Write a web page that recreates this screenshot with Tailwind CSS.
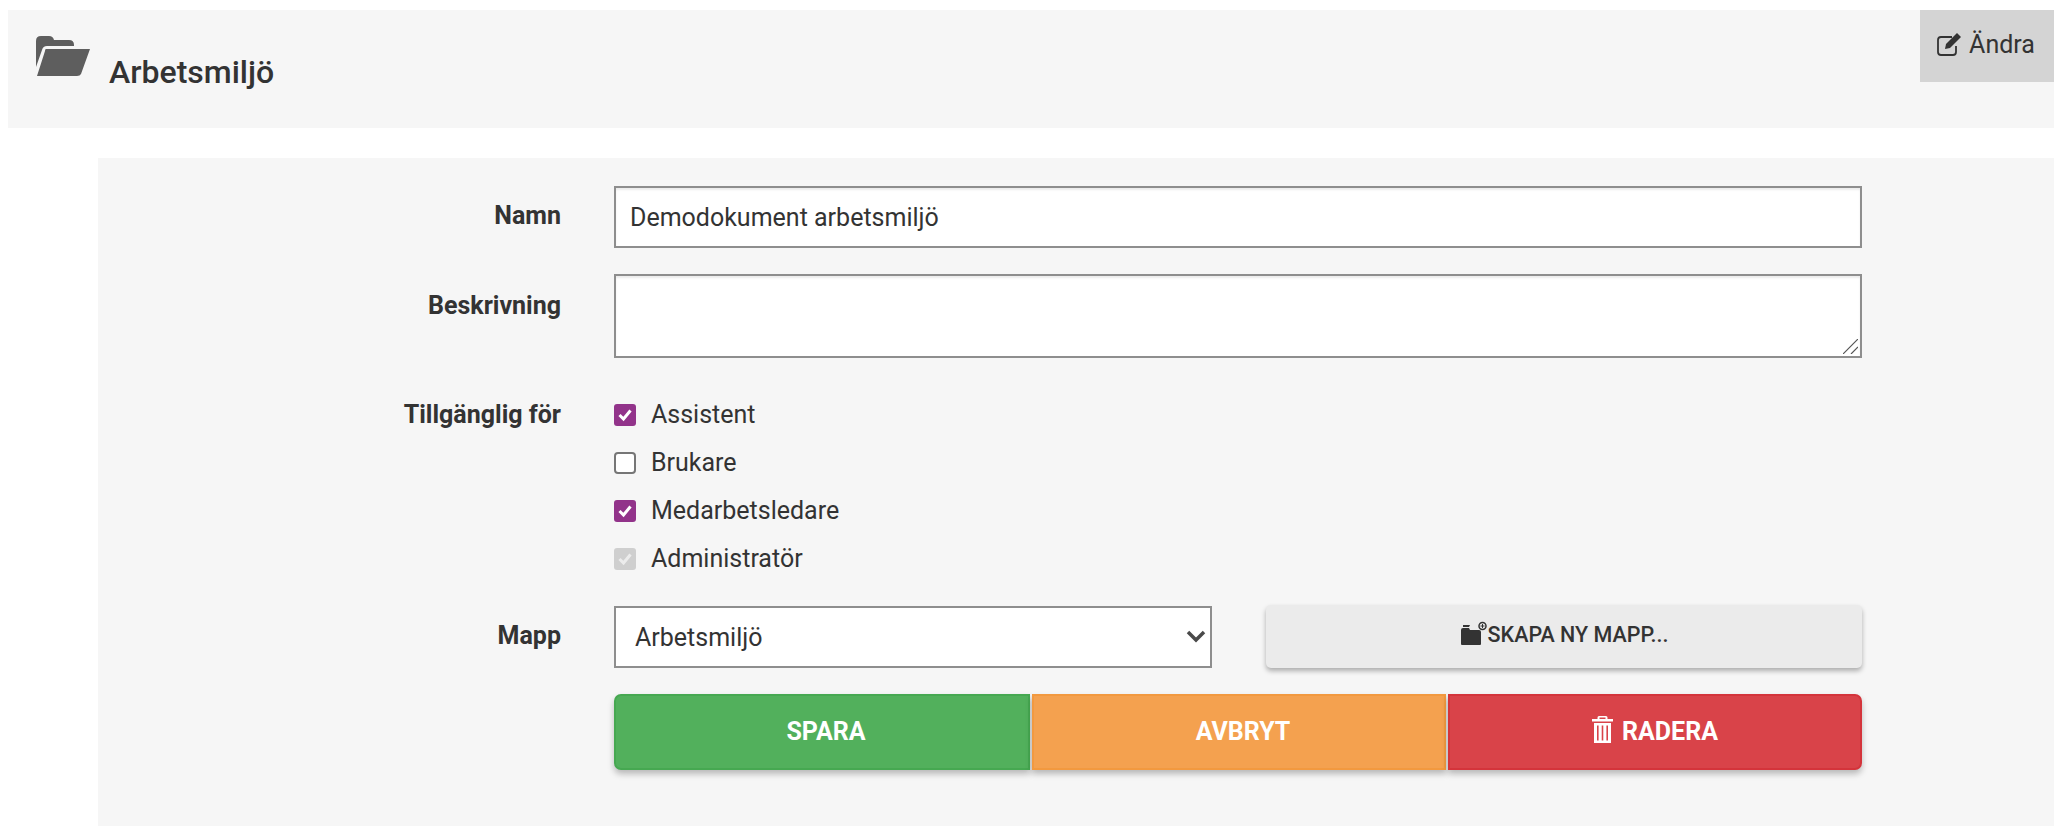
<!DOCTYPE html>
<html lang="sv">
<head>
<meta charset="utf-8" />
<title>Arbetsmiljö</title>
<script src="https://cdn.jsdelivr.net/npm/@tailwindcss/browser@4"></script>
</head>
<body class="bg-white font-['Roboto',sans-serif] text-[#333333] overflow-hidden">
  <div class="pt-[10px] pl-2 w-[2054px]">
    <!-- header -->
    <div class="flex justify-between items-start h-[118px] bg-[#f6f6f6]">
      <div class="flex pl-7 pt-[26px]">
        <svg class="w-[54px] h-[40px] text-[#5e5e5e]" viewBox="0 0 54 40" fill="currentColor">
          <path d="M0 5q0-5 5-5h8q4 0 5 4h15q5 0 5 5v1H11q-4 0-5 4L0 31z" />
          <path d="M10 13h44l-9 25q-1 2-4 2H1l8-25q0-2 1-2z" />
        </svg>
        <h1 class="ml-[19px] mt-[17px] text-[32px] leading-[38px] font-medium">Arbetsmiljö</h1>
      </div>
      <button class="flex items-center justify-center w-[134px] h-[72px] pb-[3px] bg-[#d4d4d4] text-[25px]">
        <svg class="w-[26px] h-[24px] mr-[6px] mb-[2px] -ml-[2px]" viewBox="0 0 26 24" fill="none">
          <path d="M19 14v6q0 3-3 3H4q-3 0-3-3V8q0-3 3-3h11" stroke="currentColor" stroke-width="1.800" />
          <path d="M9 12 20 1l4 4-11 11-5 1z" fill="currentColor" />
        </svg>
        Ändra
      </button>
    </div>

    <!-- form panel -->
    <div class="ml-[90px] mt-[30px] h-[668px] bg-[#f6f6f6] pt-7 pr-[192px] text-[25px]">
      <div class="grid grid-cols-[463px_1fr] gap-x-[53px]">
        <label class="text-right font-bold pt-[15px] leading-[30px]">Namn</label>
        <input class="h-[62px] w-full border-2 border-[#8e8e8e] bg-white px-[14px] shadow-[inset_0_2px_2px_rgba(0,0,0,0.08)]" type="text" value="Demodokument arbetsmiljö" />

        <label class="text-right font-bold mt-[26px] pt-[17px] leading-[30px]">Beskrivning</label>
        <div class="relative mt-[26px]">
          <textarea class="block h-[84px] w-full resize-none border-2 border-[#8e8e8e] bg-white shadow-[inset_0_2px_2px_rgba(0,0,0,0.08)]"></textarea>
          <svg class="absolute right-[4px] bottom-[4px] w-[15px] h-[15px]" viewBox="0 0 15 15" fill="none" stroke="#555" stroke-width="1.200">
            <path d="M0 15 15 0M8 15 15 8" />
          </svg>
        </div>

        <label class="text-right font-bold mt-[42px] leading-[30px]">Tillgänglig för</label>
        <div class="mt-[42px] flex flex-col gap-[18px] leading-[30px]">
          <div class="flex items-center h-[30px] gap-[15px]">
            <span class="flex items-center justify-center w-[22px] h-[22px] rounded-[3px] bg-[#92338a]">
              <svg class="w-4 h-4" viewBox="0 0 16 16" fill="none"><path d="M2.500 8 6.500 12 13.500 3.500" stroke="#fff" stroke-width="3" /></svg>
            </span>
            Assistent
          </div>
          <div class="flex items-center h-[30px] gap-[15px]">
            <span class="w-[22px] h-[22px] rounded-[4px] border-2 border-[#767676] bg-white"></span>
            Brukare
          </div>
          <div class="flex items-center h-[30px] gap-[15px]">
            <span class="flex items-center justify-center w-[22px] h-[22px] rounded-[3px] bg-[#92338a]">
              <svg class="w-4 h-4" viewBox="0 0 16 16" fill="none"><path d="M2.500 8 6.500 12 13.500 3.500" stroke="#fff" stroke-width="3" /></svg>
            </span>
            Medarbetsledare
          </div>
          <div class="flex items-center h-[30px] gap-[15px]">
            <span class="flex items-center justify-center w-[22px] h-[22px] rounded-[3px] bg-[#cfcfcf]">
              <svg class="w-4 h-4" viewBox="0 0 16 16" fill="none"><path d="M2.500 8 6.500 12 13.500 3.500" stroke="#ececec" stroke-width="3" /></svg>
            </span>
            Administratör
          </div>
        </div>

        <label class="text-right font-bold mt-[32px] pt-[15px] leading-[30px]">Mapp</label>
        <div class="mt-[32px] flex gap-[54px]">
          <div class="relative w-[598px] h-[62px] border-2 border-[#8e8e8e] bg-white flex items-center pl-[19px] pt-[2px]">
            Arbetsmiljö
            <svg class="absolute right-[3px] top-[18px] w-[22px] h-5" viewBox="0 0 22 20" fill="none"><path d="M3 6 11 14 19 6" stroke="#4a4a4a" stroke-width="3.500" /></svg>
          </div>
          <button class="flex flex-1 items-center justify-center h-[63px] -mt-[1px] pb-[3px] rounded-[5px] bg-[#ebebeb] text-[21.500px] font-medium shadow-[0_3px_5px_rgba(0,0,0,0.3)]">
            <svg class="w-[28px] h-[25px] mb-[3px]" viewBox="0 0 28 25" fill="#333333">
              <path d="M1 9q0-2 2-2h6l1 2h9q2 0 2 2v12q0 1-1 1H2q-1 0-1-1z" />
              <path d="M3 6h6l1-2H3z" />
              <circle cx="22.500" cy="5" r="3.500" fill="none" stroke="#333333" stroke-width="1.500" />
              <path d="M22.500 3v4M20.500 5h4" stroke="#333333" stroke-width="1" />
            </svg>
            SKAPA NY MAPP...
          </button>
        </div>

        <div></div>
        <div class="mt-[26px] flex gap-[2px] h-[76px] text-white text-[25px] font-bold">
          <button class="w-[416px] pl-2 rounded-l-[7px] bg-[#52b05c] border-2 border-[#46a851] shadow-[0_4px_6px_rgba(0,0,0,0.25)]">SPARA</button>
          <button class="w-[414px] pl-2 bg-[#f4a14f] border-2 border-[#f2993f] shadow-[0_4px_6px_rgba(0,0,0,0.25)]">AVBRYT</button>
          <button class="flex flex-1 items-center justify-center gap-[9px] rounded-r-[7px] bg-[#d94349] border-2 border-[#d4343b] shadow-[0_4px_6px_rgba(0,0,0,0.25)]">
            <svg class="w-[21px] h-[27px] mb-[6px]" viewBox="0 0 21 27" fill="#fff">
              <path d="M7 0h7q1.500 0 1.500 1.500V3H21v2.500H0V3h5.500V1.500Q5.500 0 7 0zM7.500 1.500V3h6V1.500z" fill-rule="evenodd" />
              <path fill-rule="evenodd" d="M2 7h17v20H2zM5 9.500v15h1.600v-15zM9.700 9.500v15h1.600v-15zM14.400 9.500v15H16v-15z" />
            </svg>
            RADERA
          </button>
        </div>
      </div>
    </div>
  </div>
</body>
</html>
